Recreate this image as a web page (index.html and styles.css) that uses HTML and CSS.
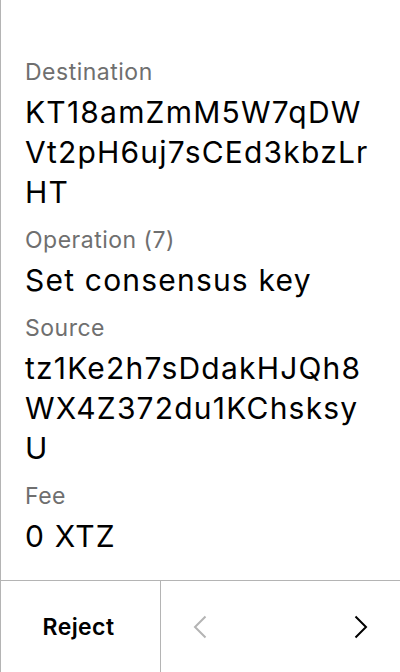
FILE: index.html
```html
<!DOCTYPE html>
<html>
<head>
<meta charset="utf-8">
<link rel="stylesheet" href="styles.css">
</head>
<body>
<div class="screen">
  <main class="content">
    <section class="field">
      <div class="label">Destination</div>
      <div class="value">KT18amZmM5W7qDWVt2pH6uj7sCEd3kbzLrHT</div>
    </section>
    <section class="field">
      <div class="label">Operation (7)</div>
      <div class="value">Set consensus key</div>
    </section>
    <section class="field">
      <div class="label">Source</div>
      <div class="value">tz1Ke2h7sDdakHJQh8WX4Z372du1KChsksyU</div>
    </section>
    <section class="field">
      <div class="label">Fee</div>
      <div class="value">0 XTZ</div>
    </section>
  </main>
  <footer class="footer">
    <div class="reject">Reject</div>
    <div class="nav">
      <svg class="chev" width="14" height="24" viewBox="0 0 14 24"><path d="M12.5 1.5 L2 12 L12.5 22.5" fill="none" stroke="#b4b4b4" stroke-width="2"/></svg>
      <svg class="chev" width="14" height="24" viewBox="0 0 14 24"><path d="M1.5 1.5 L12 12 L1.5 22.5" fill="none" stroke="#000" stroke-width="2"/></svg>
    </div>
  </footer>
</div>
</body>
</html>
```
FILE: styles.css
```css
html, body {
  margin: 0;
  padding: 0;
  background: #fff;
}
.screen {
  width: 400px;
  height: 672px;
  box-sizing: border-box;
  border-left: 1px solid #b4b4b4;
  display: flex;
  flex-direction: column;
  font-family: Inter, "Noto Sans", sans-serif;
  color: #000;
}
.content {
  flex: 1;
  padding: 57.5px 24px 0 24px;
}
.field {
  margin-bottom: 13.5px;
}
.label {
  font-size: 23px;
  line-height: 28px;
  letter-spacing: 0.5px;
  color: #6f6f6f;
  margin-bottom: 6.5px;
}
.value {
  font-size: 30px;
  line-height: 40px;
  letter-spacing: 1.2px;
  word-break: break-all;
}
.footer {
  height: 92px;
  border-top: 1px solid #b4b4b4;
  box-sizing: border-box;
  display: flex;
}
.reject {
  width: 160px;
  box-sizing: border-box;
  padding-right: 4px;
  border-right: 1px solid #b4b4b4;
  display: flex;
  align-items: center;
  justify-content: center;
  font-size: 23px;
  font-weight: 600;
  letter-spacing: 0.4px;
}
.nav {
  flex: 1;
  display: flex;
  align-items: center;
  justify-content: space-between;
  padding: 0 32px 0 32px;
}
.chev {
  display: block;
}
```
